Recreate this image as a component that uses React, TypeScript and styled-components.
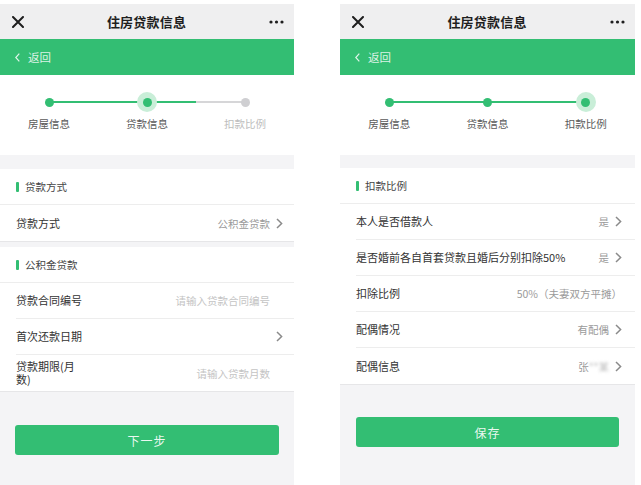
import React from "react";
import styled, { createGlobalStyle, css } from "styled-components";

const GREEN = "#33be73";

const GlobalStyle = createGlobalStyle`
  html, body {
    margin: 0;
    padding: 0;
    background: #ffffff;
  }
  body {
    font-family: "Noto Sans CJK SC", "Liberation Sans", sans-serif;
    color: #333;
  }
`;

const Page = styled.div`
  display: flex;
  gap: 46px;
  padding-top: 4px;
  width: 641px;
  height: 485px;
  box-sizing: border-box;
  overflow: hidden;
`;

const Phone = styled.div<{ $width: number }>`
  width: ${(p) => p.$width}px;
  height: 481px;
  background: #f4f4f6;
  display: flex;
  flex-direction: column;
  flex-shrink: 0;
`;

const TopBar = styled.div`
  height: 35px;
  background: #efeff0;
  display: flex;
  align-items: center;
  justify-content: space-between;
  padding: 0 10px 0 12px;
`;

const TopTitle = styled.div`
  font-size: 13px;
  font-weight: 700;
  color: #1f1f1f;
  letter-spacing: 0.2px;
`;

const BackBar = styled.div`
  height: 36px;
  background: ${GREEN};
  display: flex;
  align-items: center;
  gap: 8px;
  padding-left: 15px;
  color: rgba(255, 255, 255, 0.85);
  font-size: 11.5px;
`;

const StepArea = styled.div`
  background: #fff;
  height: 80px;
  box-sizing: border-box;
  padding-top: 17px;
  display: grid;
  grid-template-columns: repeat(3, 1fr);
`;

const Step = styled.div<{ $left?: string; $right?: string }>`
  position: relative;
  display: flex;
  flex-direction: column;
  align-items: center;

  &::before,
  &::after {
    content: "";
    position: absolute;
    top: 9px;
    height: 2px;
    width: 50%;
  }
  &::before {
    left: 0;
    background: ${(p) => p.$left ?? "transparent"};
  }
  &::after {
    right: 0;
    background: ${(p) => p.$right ?? "transparent"};
  }
`;

const DotWrap = styled.div<{ $active?: boolean }>`
  position: relative;
  z-index: 1;
  width: 20px;
  height: 20px;
  border-radius: 50%;
  display: flex;
  align-items: center;
  justify-content: center;
  background: ${(p) => (p.$active ? "#c9eed8" : "transparent")};
`;

const Dot = styled.div<{ $done?: boolean }>`
  width: 9px;
  height: 9px;
  border-radius: 50%;
  background: ${(p) => (p.$done ? GREEN : "#cfcfd2")};
`;

const StepLabel = styled.div<{ $done?: boolean }>`
  margin-top: 5px;
  font-size: 10.5px;
  line-height: 14px;
  color: ${(p) => (p.$done ? "#5a5a5a" : "#bdbdbd")};
`;

const Group = styled.div<{ $gap: number }>`
  margin-top: ${(p) => p.$gap}px;
  background: #fff;
  box-shadow: 0 1px 0 #e6e6e8;
`;

const GroupTitle = styled.div`
  height: 36px;
  box-sizing: border-box;
  display: flex;
  align-items: center;
  gap: 6px;
  padding-left: 16px;
  font-size: 10.5px;
  color: #444;
  border-bottom: 1px solid #ededed;

  &::before {
    content: "";
    width: 3px;
    height: 10px;
    border-radius: 1px;
    background: ${GREEN};
  }
`;

const Row = styled.div<{ $pad: number }>`
  height: 36px;
  box-sizing: border-box;
  margin-left: 16px;
  padding-right: ${(p) => p.$pad}px;
  display: flex;
  align-items: center;
  gap: 6px;
  border-bottom: 1px solid #ededed;

  &:last-child {
    border-bottom: none;
  }
`;

const Label = styled.div<{ $narrow?: boolean }>`
  font-size: 11px;
  line-height: 13px;
  color: #333;
  flex: ${(p) => (p.$narrow ? "0 0 66px" : "0 0 auto")};
`;

const Value = styled.div<{ $placeholder?: boolean }>`
  flex: 1;
  text-align: right;
  font-size: 10.5px;
  white-space: nowrap;
  color: ${(p) => (p.$placeholder ? "#c4c4c4" : "#9a9a9a")};
`;

const Blur = styled.span`
  filter: blur(1.6px);
  color: #bbb;
`;

const ChevronSlot = styled.span<{ $hidden?: boolean }>`
  width: 7px;
  display: flex;
  align-items: center;
  ${(p) =>
    p.$hidden &&
    css`
      visibility: hidden;
    `}
`;

const PrimaryButton = styled.button<{ $top: number; $side: number }>`
  margin: ${(p) => p.$top}px ${(p) => p.$side}px 0;
  height: 30px;
  border: none;
  border-radius: 3px;
  background: ${GREEN};
  color: rgba(255, 255, 255, 0.92);
  font-family: inherit;
  font-size: 12px;
  letter-spacing: 1px;
`;

const CloseIcon = () => (
  <svg width="12" height="12" viewBox="0 0 12 12">
    <path d="M1 1 L11 11 M11 1 L1 11" stroke="#1e1e1e" strokeWidth="2" strokeLinecap="round" />
  </svg>
);

const MoreIcon = () => (
  <svg width="15" height="4" viewBox="0 0 15 4">
    <circle cx="2" cy="2" r="1.6" fill="#1e1e1e" />
    <circle cx="7.5" cy="2" r="1.6" fill="#1e1e1e" />
    <circle cx="13" cy="2" r="1.6" fill="#1e1e1e" />
  </svg>
);

const BackIcon = () => (
  <svg width="5" height="9" viewBox="0 0 5 9">
    <path d="M4.3 0.6 L0.8 4.5 L4.3 8.4" fill="none" stroke="rgba(255,255,255,0.85)" strokeWidth="1.2" />
  </svg>
);

const Chevron = () => (
  <svg width="7" height="11" viewBox="0 0 7 11">
    <path d="M1 1 L5.6 5.5 L1 10" fill="none" stroke="#8a8a8a" strokeWidth="1.5" />
  </svg>
);

type Field = {
  label: string;
  value?: React.ReactNode;
  placeholder?: boolean;
  arrow?: boolean;
  narrow?: boolean;
};

function FieldRow({ f, pad, slot }: { f: Field; pad: number; slot: boolean }) {
  return (
    <Row $pad={pad}>
      <Label $narrow={f.narrow}>{f.label}</Label>
      <Value $placeholder={f.placeholder}>{f.value}</Value>
      {slot && (
        <ChevronSlot $hidden={!f.arrow}>
          <Chevron />
        </ChevronSlot>
      )}
    </Row>
  );
}

const STEPS = ["房屋信息", "贷款信息", "扣款比例"];

function Stepper({ current }: { current: number }) {
  return (
    <StepArea>
      {STEPS.map((s, i) => {
        const done = i <= current;
        const left = i === 0 ? undefined : done ? GREEN : "#d6d6d8";
        const right = i === STEPS.length - 1 ? undefined : i <= current ? GREEN : "#d6d6d8";
        return (
          <Step key={s} $left={left} $right={right}>
            <DotWrap $active={i === current}>
              <Dot $done={done} />
            </DotWrap>
            <StepLabel $done={done}>{s}</StepLabel>
          </Step>
        );
      })}
    </StepArea>
  );
}

function Header() {
  return (
    <>
      <TopBar>
        <CloseIcon />
        <TopTitle>住房贷款信息</TopTitle>
        <MoreIcon />
      </TopBar>
      <BackBar>
        <BackIcon />
        返回
      </BackBar>
    </>
  );
}

export default function App() {
  return (
    <>
      <GlobalStyle />
      <Page>
        <Phone $width={294}>
          <Header />
          <Stepper current={1} />
          <Group $gap={14}>
            <GroupTitle>贷款方式</GroupTitle>
            <FieldRow pad={11} slot f={{ label: "贷款方式", value: "公积金贷款", arrow: true }} />
          </Group>
          <Group $gap={6}>
            <GroupTitle>公积金贷款</GroupTitle>
            <FieldRow
              pad={11}
              slot
              f={{ label: "贷款合同编号", value: "请输入贷款合同编号", placeholder: true, narrow: true }}
            />
            <FieldRow pad={11} slot f={{ label: "首次还款日期", arrow: true, narrow: true }} />
            <FieldRow
              pad={11}
              slot
              f={{ label: "贷款期限(月数)", value: "请输入贷款月数", placeholder: true, narrow: true }}
            />
          </Group>
          <PrimaryButton $top={34} $side={15}>下一步</PrimaryButton>
        </Phone>

        <Phone $width={295}>
          <Header />
          <Stepper current={2} />
          <Group $gap={13}>
            <GroupTitle>扣款比例</GroupTitle>
            <FieldRow pad={13} slot f={{ label: "本人是否借款人", value: "是", arrow: true }} />
            <FieldRow pad={13} slot f={{ label: "是否婚前各自首套贷款且婚后分别扣除50%", value: "是", arrow: true }} />
            <FieldRow pad={13} slot={false} f={{ label: "扣除比例", value: "50%（夫妻双方平摊）" }} />
            <FieldRow pad={13} slot f={{ label: "配偶情况", value: "有配偶", arrow: true }} />
            <FieldRow
              pad={13}
              slot
              f={{
                label: "配偶信息",
                value: (
                  <>
                    张<Blur>**某</Blur>
                  </>
                ),
                arrow: true,
              }}
            />
          </Group>
          <PrimaryButton $top={33} $side={16}>保存</PrimaryButton>
        </Phone>
      </Page>
    </>
  );
}
